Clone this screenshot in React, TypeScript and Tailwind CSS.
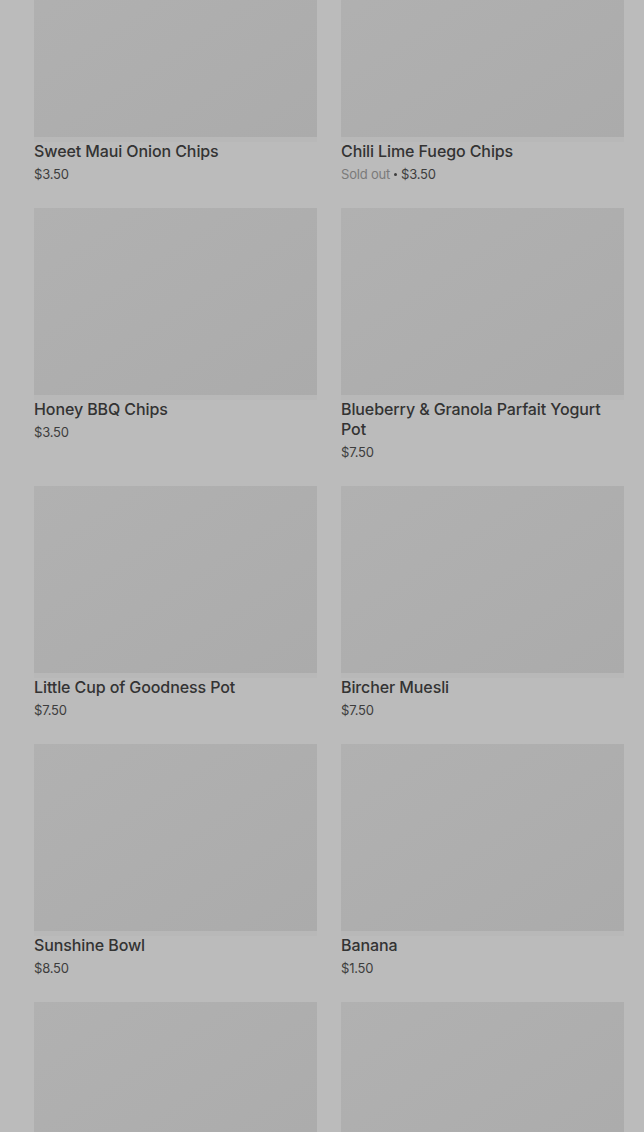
import React from "react";

type P = { name: string; price: string; soldOut?: boolean };

const products: P[] = [
  { name: "Sweet Maui Onion Chips", price: "$3.50" },
  { name: "Chili Lime Fuego Chips", price: "$3.50", soldOut: true },
  { name: "Honey BBQ Chips", price: "$3.50" },
  { name: "Blueberry & Granola Parfait Yogurt Pot", price: "$7.50" },
  { name: "Little Cup of Goodness Pot", price: "$7.50" },
  { name: "Bircher Muesli", price: "$7.50" },
  { name: "Sunshine Bowl", price: "$8.50" },
  { name: "Banana", price: "$1.50" },
  { name: "", price: "" },
  { name: "", price: "" },
];

function Card({ p }: { p: P }) {
  return (
    <div className="flex flex-col">
      <div className="h-[187px] bg-gradient-to-br from-[#b1b1b1] to-[#ababab]" />
      <div className="h-[5px] bg-[#b8b8b8]" />
      {p.name && (
        <div className="text-[16px] leading-[20px] font-medium text-[#333333] tracking-[-0.1px] -mt-[1px]">
          {p.name}
        </div>
      )}
      {p.price && (
        <div className="mt-[3px] h-[20px] overflow-hidden text-[13px] leading-[20px] text-[#3d3d3d] tracking-[-0.2px] flex items-center">
          {p.soldOut && <span className="text-[#7a7a7a]">Sold out</span>}
          {p.soldOut && (
            <span className="inline-block w-[3px] h-[3px] rounded-full bg-[#3d3d3d] mx-[4px] mt-[1px]" />
          )}
          <span>{p.price}</span>
        </div>
      )}
    </div>
  );
}

export default function App() {
  return (
    <div
      className="w-[644px] h-[1132px] overflow-hidden bg-[#bbbbbb]"
      style={{ fontFamily: "Inter, 'Noto Sans', sans-serif" }}
    >
      <div className="grid grid-cols-2 gap-x-6 gap-y-6 pl-[34px] pr-[20px] -mt-[50px]">
        {products.map((p, i) => (
          <Card key={i} p={p} />
        ))}
      </div>
    </div>
  );
}
